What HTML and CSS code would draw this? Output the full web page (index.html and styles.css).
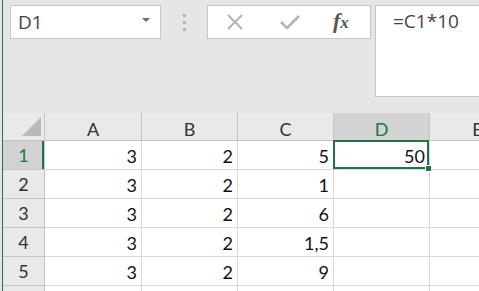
FILE: index.html
```html
<!DOCTYPE html>
<html lang="en">
<head>
    <meta charset="UTF-8">
    <meta name="viewport" content="width=device-width, initial-scale=1.0">
    <title>Sheet</title>
    <link rel="stylesheet" href="styles.css">
</head>
<body>
    <div class="app">
        <!-- Name box + formula bar -->
        <div class="toolbar">
            <div class="namebox">
                <span>D1</span>
                <span class="caret"></span>
            </div>
            <div class="grip"><i></i><i></i><i></i></div>
            <div class="fxbox">
                <svg class="btn" width="18" height="16" viewBox="0 0 18 16">
                    <path d="M2 1 L16 15 M16 1 L2 15" stroke="#b3b3b3" stroke-width="2" fill="none"/>
                </svg>
                <svg class="btn" width="20" height="14" viewBox="0 0 20 14">
                    <path d="M1 7 L7 13 L19 1" stroke="#b3b3b3" stroke-width="2.6" fill="none"/>
                </svg>
                <span class="fx">f<small>x</small></span>
            </div>
            <div class="formula">=C1*10</div>
        </div>

        <!-- Grid -->
        <div class="sheet">
            <div class="corner"><span class="tri"></span></div>
            <div class="colhead">A</div>
            <div class="colhead">B</div>
            <div class="colhead">C</div>
            <div class="colhead active">D</div>
            <div class="colhead">E</div>

            <div class="rowhead active">1</div>
            <div class="cell">3</div>
            <div class="cell">2</div>
            <div class="cell">5</div>
            <div class="cell selected">50<span class="handle"></span></div>
            <div class="cell"></div>

            <div class="rowhead">2</div>
            <div class="cell">3</div>
            <div class="cell">2</div>
            <div class="cell">1</div>
            <div class="cell"></div>
            <div class="cell"></div>

            <div class="rowhead">3</div>
            <div class="cell">3</div>
            <div class="cell">2</div>
            <div class="cell">6</div>
            <div class="cell"></div>
            <div class="cell"></div>

            <div class="rowhead">4</div>
            <div class="cell">3</div>
            <div class="cell">2</div>
            <div class="cell">1,5</div>
            <div class="cell"></div>
            <div class="cell"></div>

            <div class="rowhead">5</div>
            <div class="cell">3</div>
            <div class="cell">2</div>
            <div class="cell">9</div>
            <div class="cell"></div>
            <div class="cell"></div>

            <div class="rowhead"></div>
            <div class="cell"></div>
            <div class="cell"></div>
            <div class="cell"></div>
            <div class="cell"></div>
            <div class="cell"></div>
        </div>
    </div>
</body>
</html>
```

FILE: styles.css
```css
body {
    margin: 0;
    background: #e6e6e6;
    overflow: hidden;
    font-family: Lato, "Liberation Sans", sans-serif;
}
.app {
    margin-left: 2px;
    border-left: 1px solid #217346;
    height: 291px;
    overflow: hidden;
}

/* toolbar */
.toolbar {
    height: 113px;
    box-sizing: border-box;
    padding: 5px 0 0 7px;
    display: flex;
    align-items: flex-start;
    font-family: "Open Sans", "Noto Sans", sans-serif;
    color: #444;
}
.namebox {
    width: 151px;
    height: 34px;
    box-sizing: border-box;
    border: 1px solid #c6c6c6;
    background: #fff;
    display: flex;
    align-items: center;
    justify-content: space-between;
    padding: 0 10px 0 7px;
    font-size: 19px;
}
.caret {
    width: 0;
    height: 0;
    border-left: 4px solid transparent;
    border-right: 4px solid transparent;
    border-top: 4px solid #6a6a6a;
    margin-top: -4px;
}
.grip {
    width: 46px;
    height: 34px;
    display: flex;
    flex-direction: column;
    align-items: center;
    justify-content: center;
    gap: 4px;
}
.grip i {
    width: 3px;
    height: 3px;
    background: #b5b5b5;
}
.fxbox {
    width: 164px;
    height: 34px;
    box-sizing: border-box;
    border: 1px solid #c6c6c6;
    background: #fff;
    display: flex;
    align-items: center;
    padding: 0 0 0 18px;
}
.fxbox .btn {
    margin-right: 36px;
}
.fxbox .btn + .btn {
    margin-right: 33px;
}
.fx {
    font-family: "Liberation Serif", "DejaVu Serif", serif;
    font-style: italic;
    font-weight: bold;
    font-size: 22px;
    color: #555;
    margin-top: -2px;
}
.fx small {
    font-size: 17px;
}
.formula {
    flex: 1;
    margin-left: 4px;
    margin-right: -10px;
    height: 92px;
    box-sizing: border-box;
    border: 1px solid #c6c6c6;
    background: #fff;
    padding: 2px 0 0 17px;
    font-size: 19px;
}

/* grid */
.sheet {
    display: grid;
    grid-template-columns: 42px 97px 96px 96px 96px 96px;
    grid-template-rows: 28px repeat(6, 29px);
    background: #fff;
    overflow: hidden;
}
.corner, .colhead, .rowhead {
    background: #e9e9e9;
    border-right: 1px solid #c4c4c4;
    border-bottom: 1px solid #c4c4c4;
    color: #333;
    font-size: 18px;
    display: flex;
    align-items: center;
    justify-content: center;
}
.colhead {
    padding-top: 4px;
    box-sizing: border-box;
}
.corner {
    position: relative;
}
.tri {
    position: absolute;
    right: 3px;
    bottom: 4px;
    width: 0;
    height: 0;
    border-left: 19px solid transparent;
    border-bottom: 19px solid #b9b9b9;
}
.active {
    background: #d3d3d3;
    color: #217346;
}
.rowhead.active {
    box-shadow: inset -2px 0 0 #217346;
}
.cell {
    border-right: 1px solid #d8d8d8;
    border-bottom: 1px solid #d8d8d8;
    font-size: 18px;
    color: #111;
    display: flex;
    align-items: flex-end;
    justify-content: flex-end;
    padding: 0 4px 2px 0;
}
.selected {
    position: relative;
}
.selected::after {
    content: "";
    position: absolute;
    top: -1px;
    left: -1px;
    right: 0;
    bottom: 0;
    border: 2px solid #217346;
}
.handle {
    position: absolute;
    right: -3px;
    bottom: -3px;
    width: 5px;
    height: 5px;
    background: #217346;
    border: 1px solid #fff;
    z-index: 1;
}
```
